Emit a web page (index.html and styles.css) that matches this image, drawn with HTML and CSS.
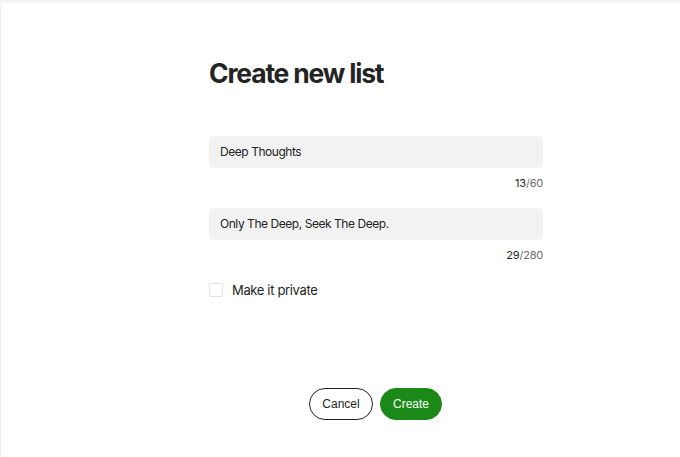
FILE: index.html
```html
<!DOCTYPE html>
<html>
<head>
<meta charset="utf-8">
<link rel="stylesheet" href="styles.css">
</head>
<body>
<div class="topstrip"></div>
<div class="page">
  <div class="dialog">
    <h1 class="title">Create new list</h1>
    <div class="field first">
      <div class="input">Deep Thoughts</div>
      <div class="counter"><span class="count">13</span>/60</div>
    </div>
    <div class="field">
      <div class="input">Only The Deep, Seek The Deep.</div>
      <div class="counter"><span class="count">29</span>/280</div>
    </div>
    <label class="check-row">
      <span class="box"></span>
      <span class="check-label">Make it private</span>
    </label>
    <div class="actions">
      <button class="btn cancel">Cancel</button>
      <button class="btn create">Create</button>
    </div>
  </div>
</div>
</body>
</html>
```
FILE: styles.css
```css
html, body {
  margin: 0;
  padding: 0;
  background: #fff;
  height: 100%;
}
body {
  font-family: Inter, "Liberation Sans", sans-serif;
  color: #242424;
  overflow: hidden;
}
.topstrip {
  height: 3px;
  background: #f4f4f4;
}
.page {
  border-left: 1px solid #f0f0f0;
  height: 454px;
  display: flex;
  justify-content: center;
  padding-left: 71px;
}
.dialog {
  width: 334px;
  display: flex;
  flex-direction: column;
}
.title {
  margin: 53px 0 0 0;
  font-size: 26.5px;
  line-height: 34px;
  font-weight: 700;
  letter-spacing: -1.2px;
  color: #242424;
}
.field.first {
  margin-top: 46px;
}
.field {
  display: flex;
  flex-direction: column;
}
.input {
  height: 32px;
  background: #f2f2f2;
  border-radius: 4px;
  padding: 0 11px;
  font-size: 12px;
  line-height: 32px;
  letter-spacing: -0.45px;
  color: #242424;
}
.counter {
  align-self: flex-end;
  font-size: 11px;
  line-height: 14px;
  margin-top: 8px;
  margin-bottom: 18px;
  letter-spacing: -0.2px;
  color: #6b6b6b;
}
.count {
  color: #242424;
}
.check-row {
  display: flex;
  align-items: center;
  gap: 9px;
  margin-top: 1px;
}
.box {
  width: 12px;
  height: 12px;
  border: 1px solid #e2e2e2;
  border-radius: 2px;
  background: #fff;
}
.check-label {
  font-size: 13px;
  line-height: 18px;
  letter-spacing: -0.35px;
  color: #242424;
}
.actions {
  display: flex;
  justify-content: center;
  gap: 7px;
  margin-top: 89px;
  padding-right: 1px;
}
.btn {
  height: 32px;
  border-radius: 16px;
  font-family: "Liberation Sans", Arial, sans-serif;
  font-size: 12px;
  padding: 0 12px;
  cursor: pointer;
}
.cancel {
  background: #fff;
  border: 1px solid #242424;
  color: #242424;
  width: 64px;
}
.create {
  background: #1a8917;
  border: 1px solid #1a8917;
  color: #fff;
  width: 62px;
}
```
